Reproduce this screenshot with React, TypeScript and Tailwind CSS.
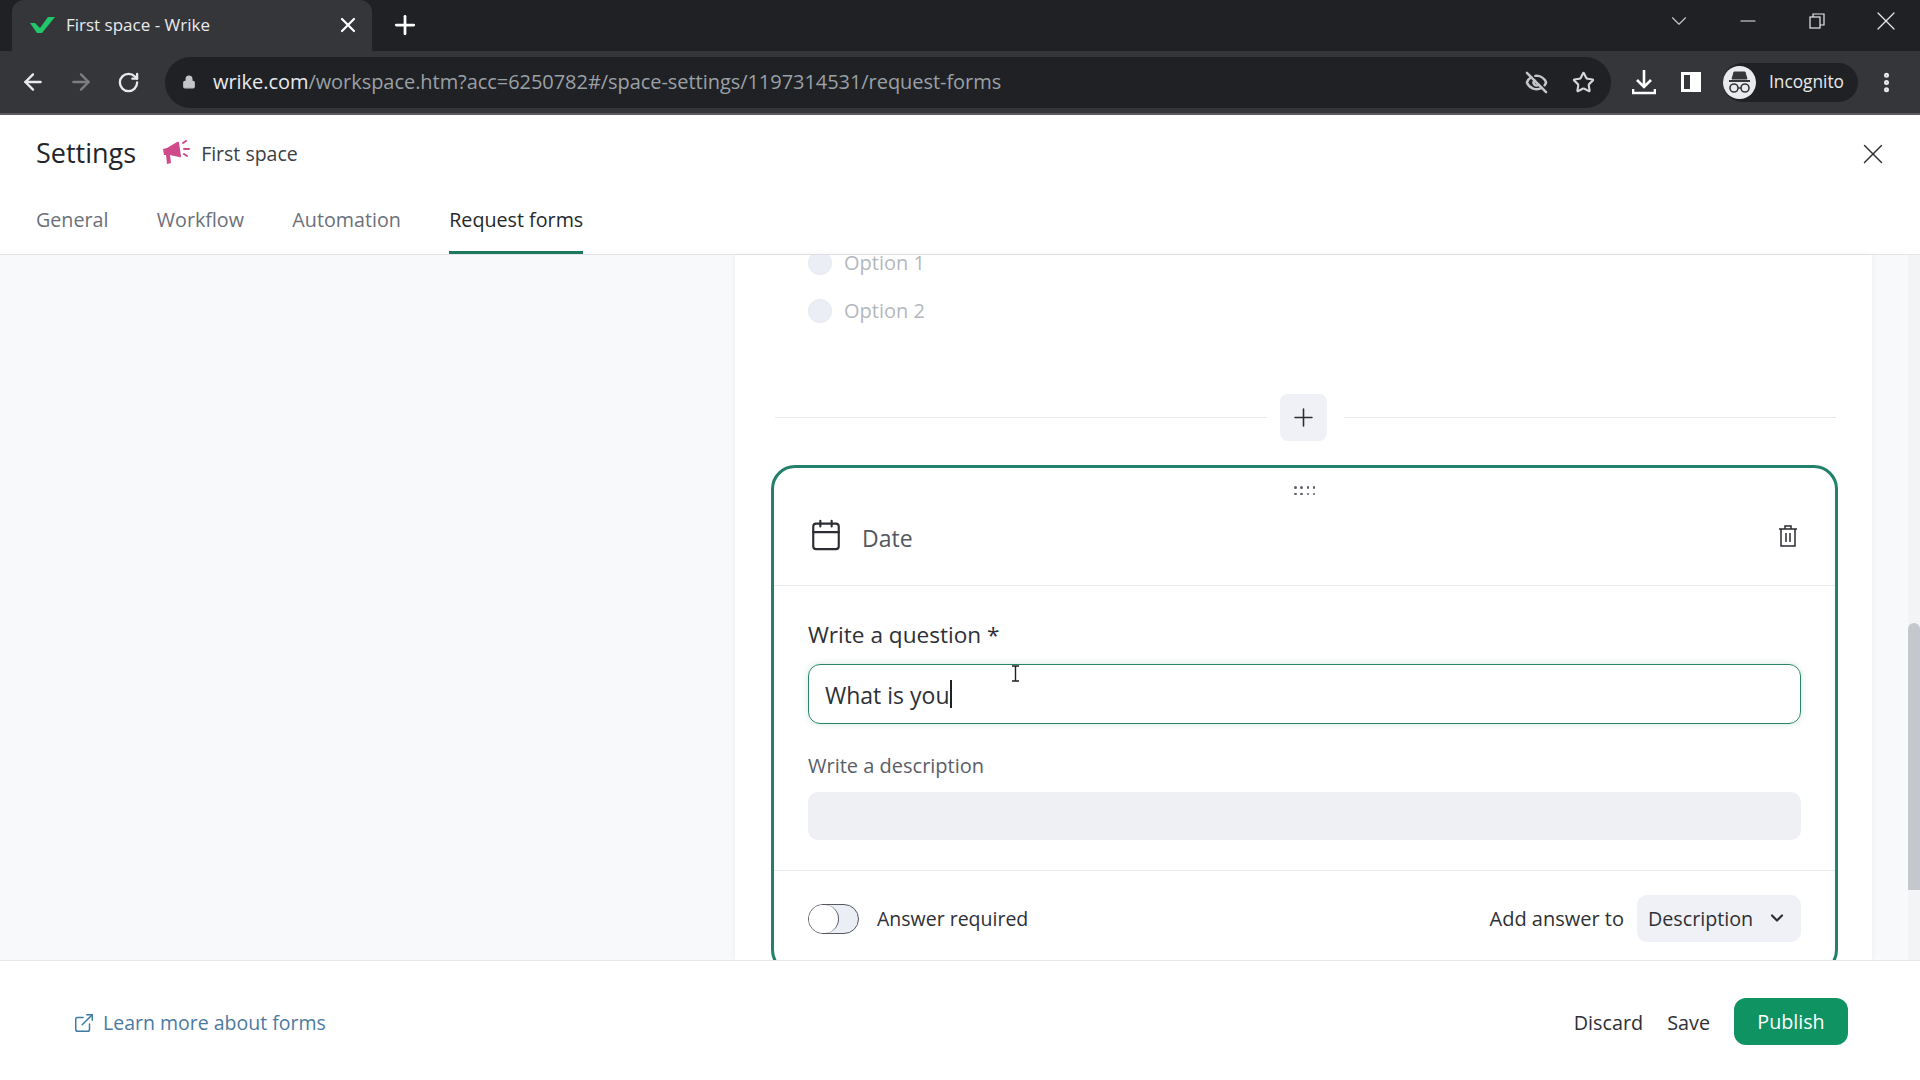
import React from 'react';
import { ArrowLeft, ArrowRight, RotateCw, Lock, Star, EyeOff, Plus, X, Minus, ChevronDown, MoreVertical, Calendar, ExternalLink } from 'lucide-react';

const font = "[font-family:'Open_Sans',sans-serif]";

function WrikeCheck() {
    return (
        <svg width="25" height="16" viewBox="0 0 25 16">
            <path d="M0 6 L5 6 L10 11 L18 0 L25 0 L12 16 L7 16 Z" fill="#22c76b" />
        </svg>
    );
}

function Megaphone() {
    return (
        <svg width="28" height="27" viewBox="0 0 28 27">
            <path d="M1 9 L5 8 L15 2 Q17 1 17 3 L19 16 Q19 18 17 17 L8 15 L9 23 L5 24 L4 15 L2 15 Z" fill="#cf4a8a" />
            <path d="M21 3 L24 1 M22 9 L27 9 M22 14 L25 16" stroke="#cf4a8a" strokeWidth="2" strokeLinecap="round" />
        </svg>
    );
}

function SidePanelIcon() {
    return (
        <div className="w-[20px] h-[20px] border-[3px] border-white bg-[#35363a] flex justify-end">
            <div className="w-[8px] bg-white" />
        </div>
    );
}

function DownloadIcon() {
    return (
        <svg width="24" height="26" viewBox="0 0 24 26" fill="none" stroke="#fff" strokeWidth="2.6">
            <path d="M12 1 V17 M5 11 L12 18 L19 11" />
            <path d="M1 20 V24 H23 V20" />
        </svg>
    );
}

function IncognitoIcon() {
    return (
        <div className="w-[33px] h-[33px] rounded-full bg-[#e8eaed] flex items-center justify-center">
            <svg width="23" height="26" viewBox="0 0 23 26" fill="none" stroke="#35363a">
                <path d="M6 3 H17 L19 10 H4 Z" fill="#35363a" />
                <path d="M1 12 H22" strokeWidth="2" />
                <circle cx="6" cy="19" r="4" strokeWidth="1.6" />
                <circle cx="17" cy="19" r="4" strokeWidth="1.6" />
                <path d="M10 19 H13" strokeWidth="1.4" />
            </svg>
        </div>
    );
}

function RestoreIcon() {
    return (
        <svg width="16" height="16" viewBox="0 0 16 16" fill="none" stroke="#e8eaed" strokeWidth="1.2">
            <rect x="1" y="4" width="10" height="11" />
            <path d="M4 4 V1 H15 V12 H11" />
        </svg>
    );
}

function TrashIcon() {
    return (
        <svg width="18" height="22" viewBox="0 0 18 22" fill="none" stroke="#2b2d33" strokeWidth="1.5">
            <path d="M0 4 H18 M2 4 V21 H16 V4 M6 4 V1 H12 V4 M7 8 V17 M11 8 V17" />
        </svg>
    );
}

function DragDots() {
    return (
        <div className="grid grid-cols-4 gap-x-[4px] gap-y-[4px] w-[21px]">
            {Array.from({ length: 8 }).map((_, i) => (
                <span key={i} className="w-[2.5px] h-[2.5px] rounded-full bg-[#5b5f68]" />
            ))}
        </div>
    );
}

function Option({ label }: { label: string }) {
    return (
        <div className="flex items-center gap-[12px] h-[24px]">
            <span className="w-[24px] h-[24px] rounded-full bg-[#eceef5] border border-[#e6e8ee]" />
            <span className="text-[20px] text-[#b4b7bd]">{label}</span>
        </div>
    );
}

export default function App() {
    return (
        <div className={`${font} w-[1920px] h-[1080px] overflow-hidden flex flex-col bg-white`}>

            {/* Chrome tab strip */}
            <div className="h-[51px] shrink-0 bg-[#202124] flex items-end pl-[12px]">
                <div className="w-[360px] h-[51px] bg-[#35363a] rounded-t-[12px] flex items-center pl-[18px] pr-[12px] pb-[1px]">
                    <WrikeCheck />
                    <span className="ml-[11px] text-[17px] text-[#e8eaed]">First space - Wrike</span>
                    <X className="ml-auto text-white" size={24} strokeWidth={2.2} />
                </div>
                <Plus className="ml-[18px] mb-[11px] text-white" size={30} strokeWidth={2.2} />
                <div className="ml-auto flex items-center h-[51px] pb-[9px]">
                    <div className="w-[69px] flex justify-center"><ChevronDown className="text-[#c8cacd]" size={26} strokeWidth={1} /></div>
                    <div className="w-[69px] flex justify-center"><Minus className="text-[#e8eaed]" size={24} strokeWidth={1.2} /></div>
                    <div className="w-[69px] flex justify-center"><RestoreIcon /></div>
                    <div className="w-[69px] flex justify-center"><X className="text-[#e8eaed]" size={32} strokeWidth={0.9} /></div>
                </div>
            </div>

            {/* Chrome toolbar */}
            <div className="h-[64px] shrink-0 bg-[#35363a] border-b-[2px] border-[#5a5b5e] flex items-center pl-[20px] pr-[20px]">
                <ArrowLeft className="text-[#e8eaed]" size={26} strokeWidth={2.2} />
                <ArrowRight className="text-[#7c7e82] ml-[22px]" size={26} strokeWidth={2.2} />
                <RotateCw className="text-[#e8eaed] ml-[23px]" size={23} strokeWidth={2.4} />
                <div className="ml-[25px] w-[1446px] h-[51px] bg-[#202124] rounded-full flex items-center pl-[17px] pr-[16px]">
                    <Lock className="text-[#c4c6c9] fill-[#c4c6c9]" size={14} strokeWidth={2} />
                    <span className="ml-[17px] text-[20px] tracking-[-0.05px] text-[#e8eaed]">wrike.com<span className="text-[#9aa0a6]">/workspace.htm?acc=6250782#/space-settings/1197314531/request-forms</span></span>
                    <EyeOff className="ml-auto text-[#c4c6c9]" size={23} strokeWidth={2.6} />
                    <Star className="ml-[24px] text-[#d4d6d9]" size={23} strokeWidth={2.2} />
                </div>
                <div className="ml-[21px]"><DownloadIcon /></div>
                <div className="ml-[25px]"><SidePanelIcon /></div>
                <div className="ml-[22px] w-[135px] h-[39px] rounded-full bg-[#202124] flex items-center">
                    <IncognitoIcon />
                    <span className="ml-[13px] text-[17.3px] text-[#e8eaed]">Incognito</span>
                </div>
                <MoreVertical className="ml-[16px] text-[#e8eaed]" size={25} strokeWidth={2.8} />
            </div>

            {/* Settings header */}
            <div className="h-[140px] shrink-0 border-b border-[#e2e4e8] px-[36px] flex flex-col">
                <div className="flex items-center pt-[19px] h-[58px]">
                    <h1 className="text-[27px] font-medium text-[#23252a]">Settings</h1>
                    <div className="ml-[26px]"><Megaphone /></div>
                    <span className="ml-[11px] text-[19.5px] text-[#3b3e45]">First space</span>
                    <X className="ml-auto mr-[-6px] text-[#2b2d33]" size={34} strokeWidth={1} />
                </div>
                <div className="flex gap-[48.4px] mt-auto text-[19.7px] text-[#6c7079] h-[65px]">
                    <div className="pt-[16px]">General</div>
                    <div className="pt-[16px]">Workflow</div>
                    <div className="pt-[16px]">Automation</div>
                    <div className="pt-[16px] text-[#25272b] border-b-[3px] border-[#1d7a5e]">Request forms</div>
                </div>
            </div>

            {/* Body */}
            <div className="flex-1 min-h-0 flex bg-[#f8f9fb]">
                <div className="w-[735px] shrink-0" />
                <div className="w-[1137px] shrink-0 bg-white shadow-[0_0_6px_rgba(0,0,0,0.06)] overflow-hidden pl-[36px] pr-[34px]">
                    <div className="-mt-[4px] pl-[37px] flex flex-col gap-[24px]">
                        <Option label="Option 1" />
                        <Option label="Option 2" />
                    </div>

                    {/* Add question divider */}
                    <div className="flex items-center mt-[71px]">
                        <div className="flex-1 h-px bg-[#e6e8ec] ml-[4px]" />
                        <div className="ml-[13px] mr-[17px] w-[47px] h-[47px] rounded-[8px] bg-[#eff1f6] flex items-center justify-center">
                            <Plus className="text-[#2b2d33]" size={29} strokeWidth={1.3} />
                        </div>
                        <div className="flex-1 h-px bg-[#e6e8ec] mr-[2px]" />
                    </div>

                    {/* Date question card */}
                    <div className="mt-[24px] h-[509px] border-[3px] border-[#23806a] rounded-[24px] flex flex-col">
                        <div className="flex justify-center pt-[18px]"><DragDots /></div>
                        <div className="flex items-center h-[97px] -mt-[6px] pl-[35px] pr-[38px] border-b border-[#e8eaee] shrink-0">
                            <Calendar className="text-[#2b2d33] -mt-[4px]" size={34} strokeWidth={1.5} />
                            <span className="ml-[19px] text-[23px] text-[#54585f] mt-[3px]">Date</span>
                            <div className="ml-auto -mt-[2px]"><TrashIcon /></div>
                        </div>
                        <div className="px-[34px] pt-[33px] h-[285px] shrink-0 border-b border-[#e8eaee]">
                            <div className="text-[22.6px] leading-[32px] text-[#2e3036]">Write a question *</div>
                            <div className="mt-[13px] h-[60px] rounded-[12px] border-[1.5px] border-[#2a8468] shadow-[0_0_6px_rgba(42,132,104,0.2)] flex items-center pl-[16px]">
                                <span className="text-[23px] text-[#2e3036] mt-[2px]">What is you</span>
                                <span className="w-[2px] h-[28px] bg-[#202124]" />
                            </div>
                            <div className="mt-[26px] text-[20px] leading-[32px] text-[#5a5e67]">Write a description</div>
                            <div className="mt-[10px] h-[48px] rounded-[10px] bg-[#eef0f4]" />
                        </div>
                        <div className="px-[34px] h-[97px] flex items-center pb-[2px]">
                            <div className="w-[51px] h-[30px] rounded-full border border-[#55585f] bg-[#eceef5]">
                                <div className="w-[30px] h-[28px] rounded-full border-r border-[#55585f] bg-white" />
                            </div>
                            <span className="ml-[18px] text-[19.5px] text-[#2e3036] mt-[1px]">Answer required</span>
                            <span className="ml-auto text-[20px] text-[#2e3036] mt-[1px]">Add answer to</span>
                            <div className="ml-[13px] w-[164px] h-[47px] rounded-[10px] bg-[#eff1f6] flex items-center pl-[11px] pr-[14px]">
                                <span className="text-[19.7px] text-[#2e3036] mt-[1px]">Description</span>
                                <ChevronDown className="ml-auto -mt-[1px] text-[#2b2d33]" size={20} strokeWidth={2.6} />
                            </div>
                        </div>
                    </div>
                </div>

                {/* Scrollbar */}
                <div className="flex-1 flex justify-end">
                    <div className="w-[12px] h-full bg-[#f3f4f6]">
                        <div className="mt-[368px] h-[267px] bg-[#c4c8cc] rounded-t-[6px]" />
                    </div>
                </div>
            </div>

            {/* Footer */}
            <div className="h-[120px] shrink-0 border-t border-[#e6e8ec] bg-white flex items-center pl-[73px] pr-[72px] pt-[4px]">
                <ExternalLink className="text-[#3b7ba6]" size={22} strokeWidth={1.6} />
                <span className="ml-[8px] text-[19.5px] text-[#4d7aa0]">Learn more about forms</span>
                <span className="ml-auto text-[19.8px] text-[#2e3036]">Discard</span>
                <span className="ml-[24px] text-[19.8px] text-[#2e3036]">Save</span>
                <div className="ml-[24px] -mt-[3px] w-[114px] h-[47px] rounded-[12px] bg-[#109362] flex items-center justify-center">
                    <span className="text-[19.7px] text-white mt-[1px]">Publish</span>
                </div>
            </div>

            {/* Mouse I-beam */}
            <div className="absolute left-[1011px] top-[665px] text-[#202124] text-[15px] leading-[16px]">
                <svg width="9" height="17" viewBox="0 0 9 17" fill="none" stroke="#202124" strokeWidth="1.4">
                    <path d="M1 1 H8 M4.5 1 V16 M1 16 H8" />
                </svg>
            </div>
        </div>
    );
}
